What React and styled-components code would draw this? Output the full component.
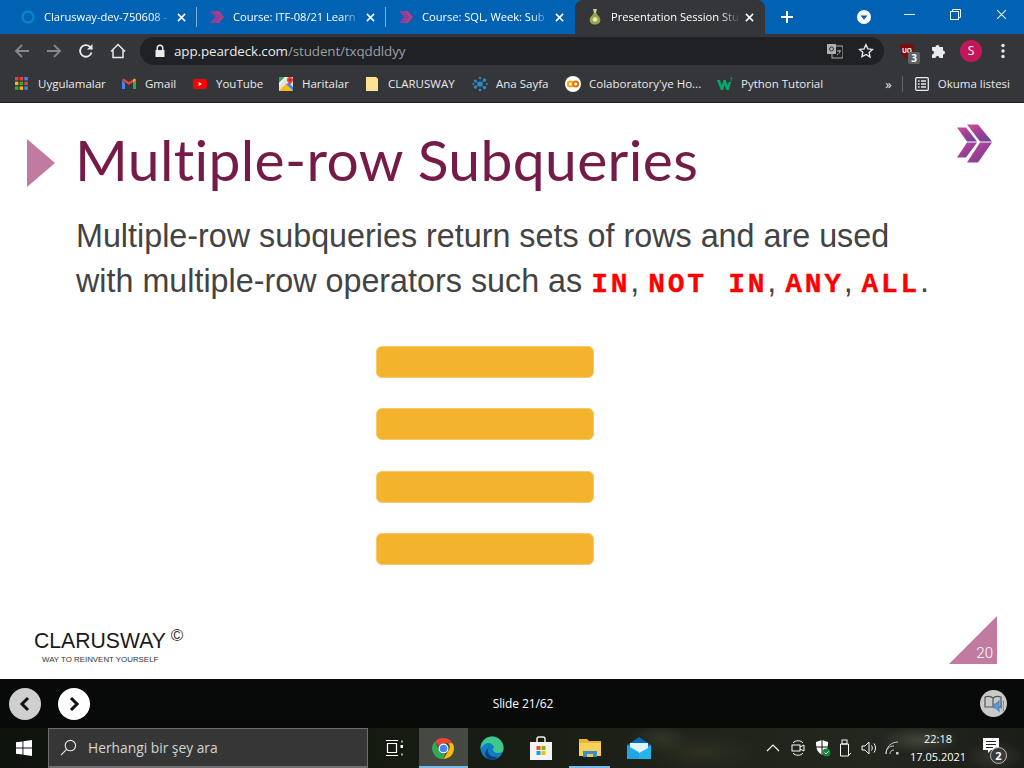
import React from "react";
import styled, { createGlobalStyle } from "styled-components";

const Global = createGlobalStyle`
  html, body { margin: 0; padding: 0; background: #fff; }
  * { box-sizing: border-box; }
  #root { width: 1024px; height: 768px; overflow: hidden; }
`;

const Page = styled.div`
  width: 1024px; height: 768px; display: flex; flex-direction: column;
  font-family: "Open Sans", "Noto Sans", sans-serif; overflow: hidden;
`;

/* ---------- Tab strip ---------- */
const TabStrip = styled.div`
  height: 34px; flex: none; background: #0162b4; display: flex; align-items: flex-end;
  padding-left: 8px; color: #fff; position: relative;
`;
const Tab = styled.div`
  width: ${p => p.$w || 189}px; height: 34px; display: flex; align-items: center; padding: 0 8px 0 12px;
  position: relative; flex: none;
  ${p => p.$active && `background:#35363a;border-radius:8px 8px 0 0;`}
  ${p => p.$sep && `&::after{content:"";position:absolute;right:0;top:7px;height:20px;width:1px;background:#7fb0da;}`}
`;
const TabIcon = styled.span`
  width: 16px; height: 16px; flex: none; display: flex; margin-right: 8px;
`;
const TabTitle = styled.span`
  flex: 1; font-size: 11.2px; line-height: 16px; white-space: nowrap; overflow: hidden; color: #fff; letter-spacing: -0.05px;
  -webkit-mask-image: linear-gradient(90deg, #000 85%, transparent 100%);
  mask-image: linear-gradient(90deg, #000 85%, transparent 100%);
`;
const TabClose = styled.span`
  width: 16px; height: 16px; display: flex; align-items: center; justify-content: center; flex: none; margin-left: 1px;
`;
const NewTab = styled.span`
  width: 16px; height: 16px; margin-left: 14px; align-self: center; display: flex;
`;
const StripRight = styled.div`
  margin-left: auto; height: 34px; display: flex; align-items: flex-start;
`;
const SearchTabs = styled.span`
  width: 14px; height: 14px; margin: 10px 15px 0 0; display: flex;
`;
const WinBtn = styled.span`
  width: 46px; height: 28px; display: flex; align-items: center; justify-content: center;
`;

/* ---------- Toolbar ---------- */
const Toolbar = styled.div`
  height: 33px; flex: none; background: #35363a; display: flex; align-items: center; padding-left: 14px;
`;
const NavIcon = styled.span`
  width: 16px; height: 16px; display: flex; margin-right: ${p => p.$mr ?? 16}px; flex: none;
`;
const Omnibox = styled.div`
  width: 744px; height: 28px; margin-left: -2px; background: #202124; border-radius: 14px; display: flex; align-items: center;
  padding: 0 10px 0 10px; flex: none;
`;
const Url = styled.span`
  font-size: 13.4px; color: #9aa0a6; margin-left: 6px; flex: 1; letter-spacing: -0.1px; white-space: nowrap;
  b { color: #e8eaed; font-weight: 400; }
`;
const OmniIcon = styled.span`
  width: 16px; height: 16px; display: flex; flex: none; margin-left: ${p => p.$ml || 0}px;
`;
const ToolbarRight = styled.div`
  display: flex; align-items: center; margin-left: 15px;
`;
const Ublock = styled.span`
  width: 16px; height: 16px; display: flex; position: relative; margin-right: 16px;
`;
const Badge = styled.span`
  position: absolute; left: 9px; top: 9px; width: 12px; height: 12px; background: #5f6368; color: #fff; border-radius: 2px;
  font: 700 10px/12px "Open Sans", sans-serif; text-align: center;
`;
const Avatar = styled.span`
  width: 22px; height: 22px; border-radius: 50%; background: #c2185b; color: #fff; margin-left: 13px;
  font-size: 12px; line-height: 22px; text-align: center; flex: none;
`;
const More = styled.span`
  width: 16px; height: 16px; margin-left: 13px; display: flex;
`;

/* ---------- Bookmarks ---------- */
const Bookmarks = styled.div`
  height: 36px; flex: none; background: #35363a; display: flex; align-items: center;
  border-bottom: 1px solid #202124; padding: 0 0 2px 15px; position: relative; color: #e8eaed;
`;
const Bookmark = styled.span`
  display: flex; align-items: center; font-size: 11.5px; white-space: nowrap; flex: none; width: ${p => p.$w ? `${p.$w}px` : "auto"};
  svg { flex: none; margin-right: ${p => p.$gap || 9}px; }
`;
const BookmarkRight = styled.div`
  margin-left: auto; display: flex; align-items: center; padding-right: 14px; font-size: 11.5px;
`;
const Chevrons = styled.span`
  font-size: 13px; margin-right: 10px; line-height: 16px;
`;
const BarSep = styled.span`
  width: 1px; height: 16px; background: #5f6368; margin-right: 12px;
`;

/* ---------- Slide ---------- */
const Slide = styled.main`
  flex: 1; background: #fff; position: relative; min-height: 0; padding: 25px 0 0 27px;
`;
const TitleRow = styled.div`
  display: flex; align-items: center; height: 66px;
`;
const TitleMark = styled.span`
  width: 0; height: 0; border-left: 28px solid #c27ba0; border-top: 24.5px solid transparent; border-bottom: 24.5px solid transparent; flex: none;
  margin-top: 4px;
`;
const Title = styled.h1`
  margin: -4px 0 0 20px; font: 400 57px/66px Lato, sans-serif; color: #741b47; white-space: nowrap; letter-spacing: 0.35px;
`;
const Body = styled.p`
  margin: 20px 0 0 49px; font: 400 32.3px/45px "Liberation Sans", Arial, sans-serif; color: #434343; white-space: nowrap;
`;
const Code = styled.span`
  color: #ff0000; font: 700 28px/45px "Liberation Mono", monospace; letter-spacing: 2.7px; word-spacing: 2px; white-space: pre;
  -webkit-text-stroke: 0.3px #ff0000;
`;
const Bars = styled.div`
  display: flex; flex-direction: column; gap: 30.5px; margin: 38.5px 0 0 349px; width: 218px;
`;
const Bar = styled.div`
  height: 32px; background: #f4b32c; border-radius: 6px; border: 1px solid #f7c768;
`;
const SlideLogo = styled.svg`
  position: absolute; left: 955px; top: 20px;
`;
const Brand = styled.div`
  position: absolute; left: 34px; top: 525px; color: #1a1a1a; width: 160px;
`;
const BrandName = styled.div`
  font: 400 21.2px/26px "Liberation Sans", sans-serif; white-space: nowrap; display: flex; letter-spacing: 0;
  sup { font-size: 17px; line-height: 14px; margin: 1px 0 0 5px; color: #333; }
`;
const BrandTag = styled.div`
  font: 400 7.9px/10px "Liberation Sans", sans-serif; margin: 1px 0 0 8px; white-space: nowrap; color: #333;
`;
const Corner = styled.div`
  position: absolute; right: 27px; bottom: 15px; width: 48px; height: 48px; background: #c27ba0;
  clip-path: polygon(100% 0, 100% 100%, 0 100%);
  color: #fff; font: 300 15px/18px Roboto, sans-serif; text-align: right; padding: 28px 4px 0 0;
`;

/* ---------- Presenter bar ---------- */
const DeckBar = styled.div`
  height: 49px; flex: none; background: #080a0a; display: flex; align-items: center; padding: 0 17px 0 9px; position: relative;
`;
const RoundBtn = styled.span`
  width: 32px; height: 32px; border-radius: 50%; background: ${p => p.$on ? "#fff" : "#cfcfcf"}; margin-right: 17px;
  display: flex; align-items: center; justify-content: center; flex: none;
`;
const SlideCount = styled.span`
  position: absolute; left: 22px; right: 0; text-align: center; color: #fff; font-size: 12px; line-height: 16px; pointer-events: none; letter-spacing: -0.1px;
`;
const AudioBtn = styled.span`
  margin-left: auto; width: 27px; height: 27px; border-radius: 50%; background: #c9c9c9; display: flex; align-items: center; justify-content: center;
`;

/* ---------- Taskbar ---------- */
const Taskbar = styled.div`
  height: 40px; flex: none; display: flex; align-items: stretch; color: #fff;
  background:
    radial-gradient(ellipse 30px 14px at 660px 10px, rgba(120,120,100,.22), transparent),
    radial-gradient(ellipse 40px 14px at 920px 12px, rgba(150,150,130,.28), transparent),
    radial-gradient(ellipse 30px 16px at 995px 28px, rgba(120,120,110,.25), transparent),
    radial-gradient(ellipse 60px 20px at 700px 24px, rgba(70,70,50,.35), transparent),
    linear-gradient(90deg, #0f130d 0%, #141a10 35%, #1c2016 60%, #23271e 85%, #1b1e17 100%);
`;
const StartBtn = styled.span`
  width: 48px; display: flex; align-items: center; justify-content: center; flex: none;
`;
const SearchBox = styled.div`
  width: 320px; flex: none; background: #363636; border: 1px solid #6d6d6d; border-bottom-width: 2px; display: flex; align-items: center;
  padding-left: 11px; font-size: 13.8px; color: #d4d4d4;
  svg { margin-right: 11px; }
`;
const TaskBtn = styled.span`
  width: ${p => p.$w || 48.8}px; flex: none; display: flex; align-items: center; justify-content: center; position: relative;
  ${p => p.$open && `background: rgba(255,255,255,.2);`}
  ${p => p.$lit && `&::after{content:"";position:absolute;left:${p.$inset || 0}px;right:${p.$inset || 0}px;bottom:0;height:2px;background:#76b9ed;}`}
`;
const Tray = styled.div`
  margin-left: auto; display: flex; align-items: center; padding-right: 13px;
`;
const TrayIcon = styled.span`
  width: ${p => p.$w}px; height: 40px; display: flex; align-items: center; justify-content: center; flex: none;
`;
const Clock = styled.div`
  width: 66px; text-align: center; font-size: 11px; line-height: 18px; color: #fff; flex: none;
`;
const Notif = styled.span`
  width: 40px; height: 40px; position: relative; display: flex; align-items: center; justify-content: center; flex: none;
  svg { margin-top: -5px; }
`;
const NotifCount = styled.span`
  position: absolute; left: 19px; top: 19px; width: 17px; height: 17px; border-radius: 50%; background: #3a3a3a; border: 1px solid #bbb;
  font: 700 11px/15px "Open Sans", sans-serif; text-align: center;
`;

/* ---------- Icons ---------- */
const Chevs = ({ s = 16 }) => (
  <svg width={s} height={s} viewBox="0 0 16 16">
    <path d="M1 2h5l5 6-5 6H1l5-6z" fill="#8e3f9e" />
    <path d="M6 2h4l5 6-5 6H6l5-6z" fill="#b0407f" />
  </svg>
);
const X = ({ s = 9, c = "#fff", w = 1.7 }) => (
  <svg width={s} height={s} viewBox="0 0 10 10"><path d="M1 1l8 8M9 1l-8 8" stroke={c} strokeWidth={w} fill="none" /></svg>
);
const Apps = () => (
  <svg width="13" height="13" viewBox="0 0 13 13">
    {[["#ea4335", "#ea4335", "#4285f4"], ["#fbbc04", "#34a853", "#ea4335"], ["#34a853", "#fbbc04", "#4285f4"]].map((r, y) =>
      r.map((c, x) => <rect key={`${x}${y}`} x={x * 4.7} y={y * 4.7} width="3.4" height="3.4" fill={c} />)
    )}
  </svg>
);
const Gmail = () => (
  <svg width="14" height="14" viewBox="0 0 14 14">
    <path d="M0 3v9h3V6z" fill="#4285f4" /><path d="M14 3v9h-3V6z" fill="#34a853" />
    <path d="M0 3l7 5 7-5-1.5-1.5L7 5 1.500 1.500z" fill="#ea4335" /><path d="M11 6l3-3-1.500-1.500L11 3z" fill="#fbbc04" />
  </svg>
);
const YouTube = () => (
  <svg width="14" height="14" viewBox="0 0 14 14">
    <rect x="0" y="2" width="14" height="10" rx="2.500" fill="#f00" /><path d="M5.700 5v4L9 7z" fill="#fff" />
  </svg>
);
const Maps = () => (
  <svg width="14" height="14" viewBox="0 0 14 14">
    <rect width="14" height="14" fill="#dfe3e0" /><path d="M0 14L7 7l7 7z" fill="#fbbc04" /><path d="M0 0h6L0 6z" fill="#34a853" />
    <path d="M0 6L6 0h2L0 9z" fill="#f4f4f4" /><path d="M14 14L7 7l3-1 4 4z" fill="#4285f4" />
    <path d="M11 0a3 3 0 0 1 3 3c0 2-3 4.500-3 4.500S8 5 8 3a3 3 0 0 1 3-3z" fill="#ea4335" />
    <circle cx="11" cy="3" r="1" fill="#8c1a11" />
  </svg>
);
const Note = () => (
  <svg width="12" height="14" viewBox="0 0 12 14"><path d="M0 0h10l2 2v12H0z" fill="#fde293" /><path d="M10 0v2h2z" fill="#f9c74f" /></svg>
);
const AnaSayfa = () => (
  <svg width="16" height="16" viewBox="0 0 16 16" fill="#2b8ac8">
    <circle cx="8" cy="8" r="2.600" /><circle cx="3.400" cy="5" r="1.600" /><circle cx="12.500" cy="4" r="1.800" /><circle cx="3.500" cy="11" r="1.700" />
    <circle cx="12.600" cy="11.600" r="1.700" /><circle cx="8" cy="2" r="1.300" /><circle cx="8" cy="14" r="1.300" /><circle cx="1.300" cy="8" r="1" /><circle cx="15" cy="8" r="1" />
    <path d="M3 5l10 7M13 4L4 11" stroke="#2b8ac8" strokeWidth="1" />
  </svg>
);
const Colab = () => (
  <svg width="16" height="16" viewBox="0 0 16 16">
    <circle cx="8" cy="8" r="8" fill="#fff" />
    <circle cx="5.300" cy="8" r="2.500" fill="none" stroke="#f9ab00" strokeWidth="2" />
    <circle cx="10.700" cy="8" r="2.500" fill="none" stroke="#e8710a" strokeWidth="2" />
  </svg>
);
const W3 = () => (
  <svg width="16" height="14" viewBox="0 0 16 14">
    <path d="M0 3h3l1.700 6L6.500 3h2.300l1.800 6 1.200-4h2.400l-2.600 8H9.300L7.700 8l-1.600 5H3.800z" fill="#04aa6d" />
    <path d="M13 1h2.200l-1 1.300c.8.300.8 1.800-.8 1.700" fill="none" stroke="#04aa6d" strokeWidth=".8" />
  </svg>
);
const Reading = () => (
  <svg width="14" height="14" viewBox="0 0 14 14" fill="none" stroke="#e8eaed" strokeWidth="1.300">
    <rect x=".7" y=".7" width="12.600" height="12.600" rx="1" />
    <path d="M3 4h1.600M3 7h1.600M3 10h1.600M6 4h5M6 7h5M6 10h5" />
  </svg>
);
const Pear = () => (
  <svg width="16" height="16" viewBox="0 0 16 16">
    <path d="M6 0h4L9 4h-2z" fill="#c9c9b0" /><path d="M6.500 4h3c.3 2 3.800 3.500 3.800 7 0 3-2.400 4.500-5.300 4.500S2.700 14 2.700 11c0-3.500 3.500-5 3.800-7z" fill="#9aa54a" />
    <circle cx="8" cy="10.500" r="2.300" fill="#e8e8c0" />
  </svg>
);
const Chrome = () => (
  <svg width="23" height="23" viewBox="0 0 24 24">
    <path d="M12 1a11 11 0 0 1 9.500 5.500H12a5.500 5.500 0 0 0-5 3.200L3.200 4.500A11 11 0 0 1 12 1z" fill="#ea4335" />
    <path d="M21.500 6.500A11 11 0 0 1 12 23l4.700-8.200a5.500 5.500 0 0 0 .1-8.300z" fill="#fbbc04" />
    <path d="M12 23A11 11 0 0 1 3.200 4.500L7.600 14.500a5.500 5.500 0 0 0 6 3z" fill="#34a853" />
    <circle cx="12" cy="12" r="5.200" fill="#fff" /><circle cx="12" cy="12" r="4" fill="#4285f4" />
  </svg>
);
const Edge = () => (
  <svg width="24" height="24" viewBox="0 0 24 24">
    <circle cx="12" cy="12" r="11.500" fill="#0f7fc4" />
    <path d="M12 .5A11.500 11.500 0 0 1 23.500 13c0 3-3 4-5.500 4-3 0-5-1.500-5-3.500 0-1 .5-1.500 1-2C13.500 8 9 6 6 7.500 3 9 1.500 11 .5 13 .5 6 5.500.5 12 .5z" fill="#3ec88a" />
    <path d="M8 15c0 3 3 6 7 6 1 0 2 0 3-.5-2 2-4 3-6 3-3 0-6-2-7-5 0-2 1-5 4-7-1 1-1 2-1 3.500z" fill="#083f7a" />
  </svg>
);
const Store = () => (
  <svg width="24" height="24" viewBox="0 0 24 24">
    <path d="M8 6V3a2 2 0 0 1 2-2h4a2 2 0 0 1 2 2v3" fill="none" stroke="#eee" strokeWidth="1.500" />
    <path d="M1 6h22v18H1z" fill="#f4f4f4" />
    <rect x="7.500" y="10" width="4" height="4" fill="#f25022" /><rect x="12.500" y="10" width="4" height="4" fill="#7fba00" />
    <rect x="7.500" y="15" width="4" height="4" fill="#00a4ef" /><rect x="12.500" y="15" width="4" height="4" fill="#ffb900" />
  </svg>
);
const Folder = () => (
  <svg width="22" height="20" viewBox="0 0 22 20">
    <path d="M0 1h8l2 2h12v15H0z" fill="#e8b53a" /><path d="M0 5h22v13H0z" fill="#fbd15c" />
    <path d="M4 13h14v6H4z" fill="#3a8ed0" /><path d="M8 16h6v3H8z" fill="#f3c64a" />
  </svg>
);
const Mail = () => (
  <svg width="24" height="22" viewBox="0 0 24 22">
    <path d="M0 8L12 0l12 8v14H0z" fill="#0a68b8" /><path d="M0 8l12 7 12-7v14H0z" fill="#27b4ee" />
    <path d="M3 6h18v5l-9 5-9-5z" fill="#dff3fc" /><path d="M0 8l12 7v7H0z" fill="#1ea0de" opacity=".7" />
  </svg>
);

export default function App() {
  return (
    <Page>
      <Global />
      <TabStrip>
        <Tab $sep>
          <TabIcon>
            <svg width="16" height="16" viewBox="0 0 16 16"><circle cx="8" cy="8" r="5.500" fill="none" stroke="#0a84c8" strokeWidth="2.400" /></svg>
          </TabIcon>
          <TabTitle>Clarusway-dev-750608 -</TabTitle>
          <TabClose><X /></TabClose>
        </Tab>
        <Tab $sep><TabIcon><Chevs /></TabIcon><TabTitle>Course: ITF-08/21 Learn</TabTitle><TabClose><X /></TabClose></Tab>
        <Tab><TabIcon><Chevs /></TabIcon><TabTitle>Course: SQL, Week: Sub</TabTitle><TabClose><X /></TabClose></Tab>
        <Tab $active $w={190}><TabIcon><Pear /></TabIcon><TabTitle>Presentation Session Stu</TabTitle><TabClose><X /></TabClose></Tab>
        <NewTab>
          <svg width="16" height="16" viewBox="0 0 16 16"><path d="M8 2v12M2 8h12" stroke="#fff" strokeWidth="2" /></svg>
        </NewTab>
        <StripRight>
          <SearchTabs>
            <svg width="14" height="14" viewBox="0 0 14 14"><circle cx="7" cy="7" r="7" fill="#fff" /><path d="M3.500 5.500h7L7 9.800z" fill="#0162b4" /></svg>
          </SearchTabs>
          <WinBtn><svg width="11" height="11" viewBox="0 0 11 11"><path d="M0 5.500h11" stroke="#e6f0f8" /></svg></WinBtn>
          <WinBtn><svg width="11" height="11" viewBox="0 0 11 11" fill="none" stroke="#e6f0f8"><rect x=".5" y="2.500" width="8" height="8" /><path d="M2.500 2.500v-2h8v8h-2" /></svg></WinBtn>
          <WinBtn><X s={11} c="#e6f0f8" w={1} /></WinBtn>
        </StripRight>
      </TabStrip>

      <Toolbar>
        <NavIcon><svg width="16" height="16" viewBox="0 0 16 16" fill="none" stroke="#85878b" strokeWidth="1.800"><path d="M15 8H2M8 2L2 8l6 6" /></svg></NavIcon>
        <NavIcon><svg width="16" height="16" viewBox="0 0 16 16" fill="none" stroke="#85878b" strokeWidth="1.800"><path d="M1 8h13M8 2l6 6-6 6" /></svg></NavIcon>
        <NavIcon><svg width="16" height="16" viewBox="0 0 16 16" fill="none" stroke="#e8eaed" strokeWidth="1.800"><path d="M13.500 9.500A5.800 5.800 0 1 1 12 3.800L14 6" /><path d="M14.500 1v5.500H9" fill="#e8eaed" stroke="none" /></svg></NavIcon>
        <NavIcon><svg width="16" height="16" viewBox="0 0 16 16" fill="none" stroke="#e8eaed" strokeWidth="1.500"><path d="M1 8.500L8 1.500l7 7M3 7v7.500h10V7" /></svg></NavIcon>
        <Omnibox>
          <OmniIcon $ml={2}><svg width="16" height="16" viewBox="0 0 16 16"><path d="M4.500 7V5a3.500 3.500 0 0 1 7 0v2h1v7h-9V7z" fill="#e8eaed" /><path d="M6 7V5a2 2 0 0 1 4 0v2z" fill="#202124" /></svg></OmniIcon>
          <Url><b>app.peardeck.com</b>/student/txqddldyy</Url>
          <OmniIcon>
            <svg width="16" height="16" viewBox="0 0 16 16"><rect x="5" y="3" width="11" height="12" fill="none" stroke="#b0b0b0" /><rect x="0" y="1" width="9" height="10" fill="#b0b0b0" /><circle cx="4.500" cy="6" r="2" fill="none" stroke="#333" /><path d="M10 8h4M12 7v1M13 8c-.5 2-1.500 3-3 4" stroke="#b0b0b0" fill="none" /></svg>
          </OmniIcon>
          <OmniIcon $ml={15}>
            <svg width="16" height="16" viewBox="0 0 24 24" fill="none" stroke="#e8eaed" strokeWidth="2"><path d="M12 2.500l2.900 6.300 6.900.8-5.100 4.700 1.400 6.800L12 17.200 5.900 20.600l1.400-6.800L2.200 9.600l6.900-.8z" /></svg>
          </OmniIcon>
        </Omnibox>
        <ToolbarRight>
          <Ublock>
            <svg width="16" height="16" viewBox="0 0 16 16"><path d="M1 2l7-1.500L15 2c0 6-1 11-7 14C2 13 1 8 1 2z" fill="#7a0c0c" /><text x="8" y="10" fontSize="6.500" fontWeight="700" fill="#fff" textAnchor="middle" fontFamily="Open Sans">UO</text></svg>
            <Badge>3</Badge>
          </Ublock>
          <NavIcon $mr={0}>
            <svg width="16" height="16" viewBox="0 0 16 16"><path d="M1 4h3.500a2 2 0 1 1 4 0H12v3.500a2 2 0 1 1 0 4V15H8.500a2 2 0 1 0-4 0H1v-3.500a2 2 0 1 0 0-4z" fill="#e8eaed" /></svg>
          </NavIcon>
          <Avatar>S</Avatar>
          <More>
            <svg width="16" height="16" viewBox="0 0 16 16" fill="#e8eaed"><circle cx="8" cy="2.500" r="1.700" /><circle cx="8" cy="8" r="1.700" /><circle cx="8" cy="13.500" r="1.700" /></svg>
          </More>
        </ToolbarRight>
      </Toolbar>

      <Bookmarks>
        <Bookmark $w={107} $gap={10}><Apps />Uygulamalar</Bookmark>
        <Bookmark $w={71}><Gmail />Gmail</Bookmark>
        <Bookmark $w={86}><YouTube />YouTube</Bookmark>
        <Bookmark $w={87}><Maps />Haritalar</Bookmark>
        <Bookmark $w={106} $gap={10}><Note />CLARUSWAY</Bookmark>
        <Bookmark $w={93} $gap={8}><AnaSayfa />Ana Sayfa</Bookmark>
        <Bookmark $w={152} $gap={8}><Colab />Colaboratory'ye Ho...</Bookmark>
        <Bookmark $w={120} $gap={8}><W3 />Python Tutorial</Bookmark>
        <BookmarkRight>
          <Chevrons>»</Chevrons>
          <BarSep />
          <Bookmark $gap={9}><Reading />Okuma listesi</Bookmark>
        </BookmarkRight>
      </Bookmarks>

      <Slide>
        <TitleRow>
          <TitleMark />
          <Title>Multiple-row Subqueries</Title>
        </TitleRow>
        <Body>
          Multiple-row subqueries return sets of rows and are used<br />
          with multiple-row operators such as <Code>IN</Code>, <Code>NOT IN</Code>, <Code>ANY</Code>, <Code>ALL</Code>.
        </Body>
        <Bars><Bar /><Bar /><Bar /><Bar /></Bars>
        <SlideLogo width="38" height="41" viewBox="0 0 38 40">
          <defs>
            <linearGradient id="lg" x1="0" y1="0" x2="1" y2="1">
              <stop offset="0" stopColor="#d44c9a" /><stop offset=".5" stopColor="#9a3f96" /><stop offset="1" stopColor="#5a4aa0" />
            </linearGradient>
          </defs>
          <path d="M2 4h9l11 14H12z" fill="url(#lg)" /><path d="M12 1h11l14 17H25z" fill="url(#lg)" />
          <path d="M12 19h10L11 34H2z" fill="url(#lg)" /><path d="M25 19h12L23 39H12z" fill="url(#lg)" />
        </SlideLogo>
        <Brand>
          <BrandName>CLARUSWAY<sup>©</sup></BrandName>
          <BrandTag>WAY TO REINVENT YOURSELF</BrandTag>
        </Brand>
        <Corner>20</Corner>
      </Slide>

      <DeckBar>
        <RoundBtn>
          <svg width="14" height="16" viewBox="0 0 14 16" fill="none" stroke="#111" strokeWidth="3"><path d="M10 2L4 8l6 6" /></svg>
        </RoundBtn>
        <RoundBtn $on>
          <svg width="14" height="16" viewBox="0 0 14 16" fill="none" stroke="#111" strokeWidth="3"><path d="M4 2l6 6-6 6" /></svg>
        </RoundBtn>
        <SlideCount>Slide 21/62</SlideCount>
        <AudioBtn>
          <svg width="20" height="18" viewBox="0 0 20 18" fill="none" stroke="#555" strokeWidth="1.200">
            <path d="M1 2c3-1 6-1 8 1 2-2 5-2 8-1v10H9H1zM9 3v9" />
            <path d="M10 9h2l3-3v10l-3-3h-2z" fill="#5b9bd5" stroke="#4a8ac4" />
            <path d="M17 8c1 1 1 5 0 6M19 6c1.500 2 1.500 8 0 10" stroke="#4a8ac4" />
          </svg>
        </AudioBtn>
      </DeckBar>

      <Taskbar>
        <StartBtn>
          <svg width="16" height="16" viewBox="0 0 16 16" fill="#fff"><path d="M0 2.300L6.500 1.400v6.200H0zM7.400 1.300L16 0v7.600H7.400zM0 8.400h6.500v6.200L0 13.700zM7.400 8.400H16V16l-8.600-1.300z" /></svg>
        </StartBtn>
        <SearchBox>
          <svg width="17" height="17" viewBox="0 0 18 18" fill="none" stroke="#e8e8e8" strokeWidth="1.200"><circle cx="11" cy="7" r="5.500" /><path d="M7 11l-6 6" /></svg>
          Herhangi bir şey ara
        </SearchBox>
        <TaskBtn $w={51}>
          <svg width="18" height="16" viewBox="0 0 18 16" fill="none" stroke="#fff" strokeWidth="1.200"><path d="M1 .5h12M1 15.500h12M2.500 3.500h9v9h-9zM17 .5v2M17 13.500v2" /><rect x="15.500" y="5" width="3" height="3" fill="#fff" stroke="none" /></svg>
        </TaskBtn>
        <TaskBtn $open $lit><Chrome /></TaskBtn>
        <TaskBtn><Edge /></TaskBtn>
        <TaskBtn><Store /></TaskBtn>
        <TaskBtn $lit $inset={4}><Folder /></TaskBtn>
        <TaskBtn><Mail /></TaskBtn>
        <Tray>
          <TrayIcon $w={24}><svg width="14" height="8" viewBox="0 0 14 8" fill="none" stroke="#fff" strokeWidth="1.200"><path d="M1 7l6-6 6 6" /></svg></TrayIcon>
          <TrayIcon $w={25}><svg width="14" height="18" viewBox="0 0 14 18" fill="none" stroke="#fff" strokeWidth="1"><path d="M2 4c2-3 8-3 10 0M2 14c2 3 8 3 10 0" /><rect x="1" y="6" width="8" height="6" /><path d="M9 8l4-2v6l-4-2" /></svg></TrayIcon>
          <TrayIcon $w={25}>
            <svg width="16" height="18" viewBox="0 0 16 18"><path d="M1 3l6-2 6 2c0 6-1 10-6 13C2 13 1 9 1 3z" fill="#fff" /><path d="M7 1v15M1 8h12" stroke="#111" /><circle cx="11.500" cy="13.500" r="4" fill="#10893e" /><path d="M9.500 13.500l1.500 1.500 2.500-2.500" stroke="#fff" fill="none" /></svg>
          </TrayIcon>
          <TrayIcon $w={22}><svg width="14" height="18" viewBox="0 0 14 18" fill="none" stroke="#fff" strokeWidth="1"><rect x="3" y="1" width="5" height="4" /><path d="M1.500 5h8v12h-8zM10 16l2-2" /></svg></TrayIcon>
          <TrayIcon $w={23}><svg width="16" height="14" viewBox="0 0 16 14" fill="none" stroke="#fff" strokeWidth="1"><path d="M1 5h3l4-4v12L4 9H1zM10.500 4.500c1 1.500 1 3.500 0 5M13 2.500c2 2.500 2 6.500 0 9" /></svg></TrayIcon>
          <TrayIcon $w={25}><svg width="16" height="14" viewBox="0 0 16 14" fill="none" stroke="#ccc" strokeWidth="1"><path d="M1 13C1 6 6 1 13 1M1 13c0-5 3-8 8-8M5 13c0-2 1-4 4-4" /><rect x="11" y="11" width="2.500" height="2.500" fill="#ccc" stroke="none" /></svg></TrayIcon>
          <Clock>22:18<br />17.05.2021</Clock>
          <Notif>
            <svg width="16" height="15" viewBox="0 0 16 15"><path d="M0 0h16v12H8l-3 3v-3H0z" fill="#fff" /><path d="M3 3.500h10M3 6.500h10M3 9.500h7" stroke="#222" /></svg>
            <NotifCount>2</NotifCount>
          </Notif>
        </Tray>
      </Taskbar>
    </Page>
  );
}
